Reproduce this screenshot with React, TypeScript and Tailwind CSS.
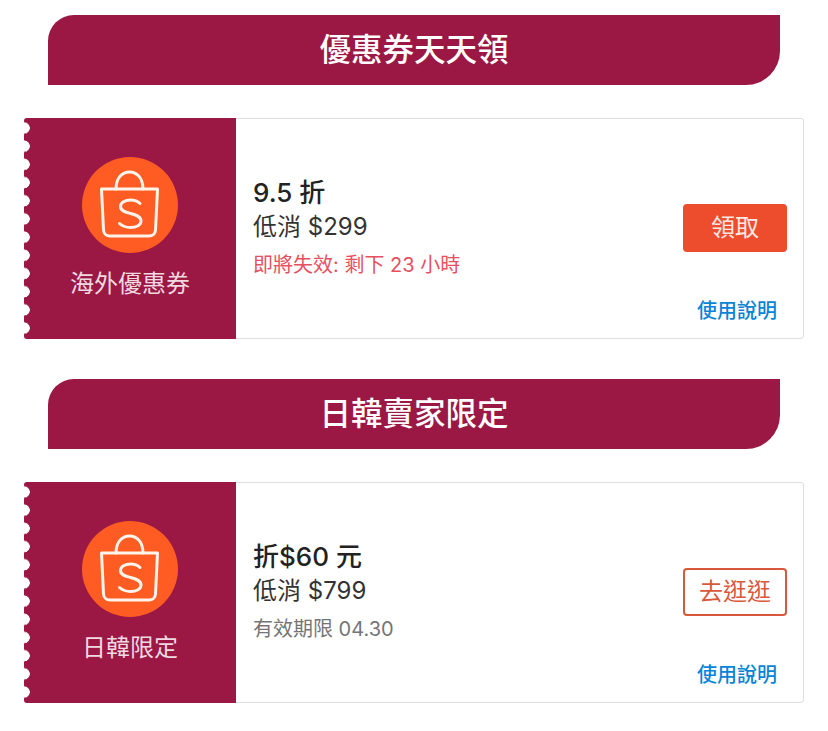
import React from 'react';

const font = "font-['Inter','Noto_Sans_CJK_TC',sans-serif]";

const ShopBag = () => (
  <svg viewBox="0 0 96 96" className="w-24 h-24">
    <circle cx="48" cy="48" r="48" fill="#fe5c22" />
    <g fill="none" stroke="#fff3ea" strokeWidth="3" strokeLinecap="round" strokeLinejoin="round">
      <path d="M19.5 32H75.5L73.5 73C73.3 76.8 70.5 79 67 79H28C24.5 79 21.7 76.8 21.5 73Z" />
      <path d="M34 32C34 21 40 15 47.5 15C55 15 61 21 61 32" />
      <path d="M58 46.5C55.8 44.2 52.5 43 48.5 43C43 43 38.5 45.5 38.5 49.5C38.5 54 43.5 55.2 48.5 56.5C54 57.9 59 59.5 59 64C59 68 54.5 70.5 48.5 70.5C44 70.5 40.5 69.2 37.5 66.5" />
    </g>
  </svg>
);

const SectionHeader = ({ title, className = '' }: { title: string; className?: string }) => (
  <div className={`ml-12 w-[732px] h-[70px] bg-[#9a1843] rounded-tl-[26px] rounded-br-[34px] flex items-center justify-center text-white text-[31.5px] font-medium ${className}`}>
    {title}
  </div>
);

const Coupon = ({ label, title, minSpend, note, noteClass, action, actionClass, className = '' }: any) => (
  <div className={`ml-6 w-[780px] h-[221px] flex bg-white border border-[#dedede] rounded-[3px] ${className}`}>
    <div className="relative w-[212px] -my-px -ml-px bg-[#9a1843] flex flex-col items-center pt-[39px] rounded-l-[3px]">
      <div className="absolute left-0 top-0 bottom-0 w-[7px] bg-[radial-gradient(circle_at_0_10px,#ffffff_5.5px,transparent_6px)] bg-[length:7px_18.2px]" />
      <ShopBag />
      <div className="mt-[15px] text-[24px] leading-[32px] text-[#f0d9e1]">{label}</div>
    </div>
    <div className="flex-1 relative pl-[17px] pt-[55px]">
      <div className="text-[26px] leading-[37px] font-medium text-[#222222]">{title}</div>
      <div className="text-[24px] leading-[32px] text-[#333333]">{minSpend}</div>
      <div className={`mt-[8px] text-[20px] leading-[28px] ${noteClass}`}>{note}</div>
      <div className={`absolute right-4 top-[85px] w-[104px] h-12 rounded-[4px] flex items-center justify-center text-[24px] ${actionClass}`}>
        {action}
      </div>
      <div className="absolute right-[26px] bottom-[13px] text-[20px] leading-[28px] font-medium text-[#0a84d6]">使用說明</div>
    </div>
  </div>
);

export default function App() {
  return (
    <div className={`w-[828px] h-[731px] bg-white pt-[15px] overflow-hidden ${font}`}>
      <SectionHeader title="優惠券天天領" />
      <Coupon
        className="mt-[33px]"
        label="海外優惠券"
        title="9.5 折"
        minSpend="低消 $299"
        note="即將失效: 剩下 23 小時"
        noteClass="text-[#e8505f]"
        action="領取"
        actionClass="bg-[#ee4d2d] text-[#fde9e3]"
      />
      <SectionHeader title="日韓賣家限定" className="mt-10" />
      <Coupon
        className="mt-[33px]"
        label="日韓限定"
        title="折$60 元"
        minSpend="低消 $799"
        note="有效期限 04.30"
        noteClass="text-[#757575]"
        action="去逛逛"
        actionClass="border-2 border-[#d9583c] text-[#d9583c] bg-white"
      />
    </div>
  );
}
